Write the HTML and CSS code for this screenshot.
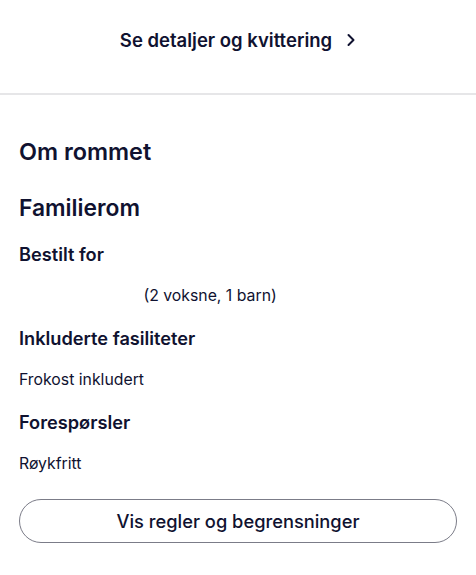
FILE: index.html
```html
<!DOCTYPE html>
<html lang="no">
<head>
<meta charset="utf-8">
<link rel="stylesheet" href="styles.css">
</head>
<body>
<div class="top">
  <a class="details-link">Se detaljer og kvittering <svg class="chev" width="10" height="14" viewBox="0 0 10 14"><path d="M2.5 2 L7.5 7 L2.5 12" fill="none" stroke="#101230" stroke-width="2" stroke-linecap="round" stroke-linejoin="round"/></svg></a>
</div>
<div class="divider"></div>
<section class="room">
  <h2 class="title">Om rommet</h2>
  <h3 class="room-name">Familierom</h3>
  <h4 class="label">Bestilt for</h4>
  <p class="value"><span class="redacted">Ola Nordmann</span> (2 voksne, 1 barn)</p>
  <h4 class="label">Inkluderte fasiliteter</h4>
  <p class="value">Frokost inkludert</p>
  <h4 class="label">Forespørsler</h4>
  <p class="value">Røykfritt</p>
  <button class="rules-btn">Vis regler og begrensninger</button>
</section>
</body>
</html>
```
FILE: styles.css
```css
* { box-sizing: border-box; }
body {
  margin: 0;
  background: #fff;
  font-family: Inter, "Noto Sans", sans-serif;
  color: #101230;
}
.top {
  height: 93px;
  display: flex;
  align-items: center;
  justify-content: center;
  padding-bottom: 13px;
}
.details-link {
  font-size: 18.5px;
  font-weight: 600;
  display: flex;
  align-items: center;
  gap: 14px;
}
.chev { display: block; }
.divider {
  height: 2px;
  background: #e6e6e8;
}
.room {
  padding: 0 19px;
  display: flex;
  flex-direction: column;
}
.title {
  margin: 0;
  margin-top: 43px;
  font-size: 23.4px;
  font-weight: 600;
  line-height: 28px;
}
.room-name {
  margin: 0;
  margin-top: 28px;
  font-size: 22.8px;
  font-weight: 600;
  line-height: 28px;
}
.label {
  margin: 0;
  margin-top: 21px;
  font-size: 18.2px;
  font-weight: 600;
  line-height: 22px;
}
.value {
  margin: 0;
  margin-top: 21px;
  font-size: 15.8px;
  line-height: 20px;
  font-weight: 400;
}
.redacted {
  display: inline-block;
  width: 120px;
  color: transparent;
}
.rules-btn {
  margin-top: 25px;
  height: 44px;
  border: 1.5px solid #7b7c88;
  border-radius: 22px;
  background: #fff;
  font-family: inherit;
  font-size: 18.3px;
  font-weight: 500;
  color: #101230;
}
```
